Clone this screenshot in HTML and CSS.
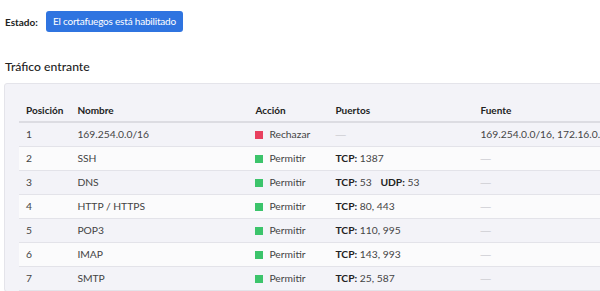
FILE: index.html
```html
<!DOCTYPE html>
<html lang="es">
<head>
    <meta charset="UTF-8">
    <title>Cortafuegos</title>
    <link rel="stylesheet" href="styles.css">
</head>
<body>

    <div class="status">
        <span class="status-label">Estado:</span>
        <a href="javascript:void(0)" class="btn">El cortafuegos está habilitado</a>
    </div>

    <h2 class="title">Tráfico entrante</h2>

    <div class="panel">
        <table class="rules">
            <thead>
                <tr>
                    <th class="c-pos">Posición</th>
                    <th class="c-name">Nombre</th>
                    <th class="c-act">Acción</th>
                    <th class="c-port">Puertos</th>
                    <th class="c-src">Fuente</th>
                </tr>
            </thead>
            <tbody>
                <tr>
                    <td>1</td>
                    <td>169.254.0.0/16</td>
                    <td><i class="dot deny"></i>Rechazar</td>
                    <td><span class="none">—</span></td>
                    <td>169.254.0.0/16, 172.16.0.0/12, 192.168.0.0/16</td>
                </tr>
                <tr>
                    <td>2</td>
                    <td>SSH</td>
                    <td><i class="dot allow"></i>Permitir</td>
                    <td><b>TCP:</b> 1387</td>
                    <td><span class="none">—</span></td>
                </tr>
                <tr>
                    <td>3</td>
                    <td>DNS</td>
                    <td><i class="dot allow"></i>Permitir</td>
                    <td><b>TCP:</b> 53 <b class="proto">UDP:</b> 53</td>
                    <td><span class="none">—</span></td>
                </tr>
                <tr>
                    <td>4</td>
                    <td>HTTP / HTTPS</td>
                    <td><i class="dot allow"></i>Permitir</td>
                    <td><b>TCP:</b> 80, 443</td>
                    <td><span class="none">—</span></td>
                </tr>
                <tr>
                    <td>5</td>
                    <td>POP3</td>
                    <td><i class="dot allow"></i>Permitir</td>
                    <td><b>TCP:</b> 110, 995</td>
                    <td><span class="none">—</span></td>
                </tr>
                <tr>
                    <td>6</td>
                    <td>IMAP</td>
                    <td><i class="dot allow"></i>Permitir</td>
                    <td><b>TCP:</b> 143, 993</td>
                    <td><span class="none">—</span></td>
                </tr>
                <tr>
                    <td>7</td>
                    <td>SMTP</td>
                    <td><i class="dot allow"></i>Permitir</td>
                    <td><b>TCP:</b> 25, 587</td>
                    <td><span class="none">—</span></td>
                </tr>
            </tbody>
        </table>
    </div>

</body>
</html>
```

FILE: styles.css
```css
*{margin: 0;padding: 0;box-sizing: border-box;}
a{text-decoration: none;}
html,body{overflow: hidden;}
body{width: 900px; padding: 11px 0 0 5px; font-size: 10.3px; font-family: Lato, "Noto Sans", sans-serif; color: #333; background: #fff;}

.status{display: flex; align-items: center; gap: 8px; height: 21px;}
.status-label{font-weight: bold; color: #222; font-size: 10px;}
.btn{display: block; height: 21px; line-height: 21px; padding: 0 7px; background: #2f74e0; color: #fff; border-radius: 3px; font-size: 10px; letter-spacing: -0.2px;}

.title{margin-top: 26px; font-size: 12.2px; font-weight: 500; color: #222; line-height: 18px;}

.panel{margin: 7px 0 0 -1px; padding: 13px 0 0 14px; background: #f3f3f8; border: 1px solid #e4e4ea; border-radius: 3px; width: 880px;}

.rules{border-collapse: collapse; width: 850px;}
.rules th{text-align: left; font-weight: bold; font-size: 10px; color: #222; padding: 6px 7px 4px; border-bottom: 2px solid #dcdce2; line-height: 14px;}
.rules td{padding: 0 7px; height: 24px; border-bottom: 1px solid #e3e3e9; color: #444;}
.rules tbody tr:nth-child(even){background: #fbfbfc;}
.rules b{color: #222;}
.rules b.proto{margin-left: 6px;}

.c-pos{width: 51px;}
.c-name{width: 178px;}
.c-act{width: 80px;}
.c-port{width: 145px;}

.dot{display: inline-block; width: 8px; height: 8px; margin-right: 6px; vertical-align: -1px;}
.dot.deny{background: #e8405f;}
.dot.allow{background: #3cc46b;}
.none{font-family: "Liberation Sans", sans-serif; color: #cfcfd4;}
```
